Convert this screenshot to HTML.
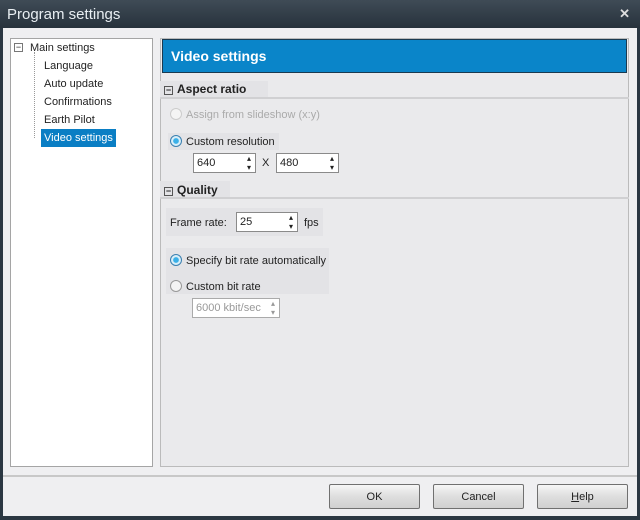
<!DOCTYPE html>
<html><head><style>
*{box-sizing:border-box;margin:0;padding:0}
body{width:640px;height:520px;overflow:hidden;background:#2b3742;font-family:"Liberation Sans",sans-serif;font-size:11px;color:#222;position:relative}
.tb{position:absolute;left:0;top:0;width:640px;height:28px;background:linear-gradient(#3f4b56,#27323c);color:#e8eef2;font-size:15px;padding:6px 0 0 7px}
.x{position:absolute;right:10px;top:6px;font-size:13px;font-weight:bold;color:#ddd}
.client{position:absolute;left:3px;top:28px;width:634px;height:488px;background:#efeff1}
.a{position:absolute;white-space:nowrap}
.tree{left:10px;top:38px;width:143px;height:429px;background:#fff;border:1px solid #a5a5a5}
.panel{left:160px;top:38px;width:469px;height:429px;background:#eaeaec;border:1px solid #bbb}
.hdr{left:162px;top:39px;width:465px;height:34px;background:#0a85c9;border:1px solid #1a3a50;color:#fff;font-weight:bold;font-size:14px;padding:8px 0 0 8px}
.sec{font-weight:bold;font-size:12px}
.sec i{display:inline-block;width:9px;height:9px;border:1px solid #555;font-style:normal;font-size:9px;line-height:6px;text-align:center;margin-right:4px;vertical-align:0}
.line{height:2px;background:#d0d0d2}
.rad{display:inline-block;width:12px;height:12px;border-radius:50%;border:1px solid #999;background:#f4f4f4;vertical-align:-2px;margin-right:4px}
.rad.on{border-color:#3a7fb0;background:radial-gradient(#3ab0e8 35%,#d8eef8 45%)}
.spin{background:#fff;border:1px solid #8a8a8a;height:20px;padding:3px 3px;font-size:11px}
.spin:after{content:"▴\A▾";white-space:pre;position:absolute;right:4px;top:0;font-size:8px;line-height:9px}
.btn{top:484px;width:91px;height:25px;border:1px solid #707070;border-radius:2px;background:linear-gradient(#f6f6f6,#dedede 50%,#d0d0d0);text-align:center;padding-top:6px}
.t{position:absolute;font-size:11px;white-space:nowrap}
</style></head><body>
<div class="tb">Program settings</div><div class="x">✕</div>
<div class="client"></div>
<div class="a tree"></div>
<div class="a" style="left:14px;top:43px;width:9px;height:9px;border:1px solid #777;font-size:9px;line-height:6px;text-align:center;background:#fff">−</div>
<div class="a" style="left:34px;top:52px;height:86px;border-left:1px dotted #999"></div>
<div class="t" style="left:30px;top:42px">Main settings</div>
<div class="t" style="left:44px;top:60px">Language</div>
<div class="t" style="left:44px;top:78px">Auto update</div>
<div class="t" style="left:44px;top:96px">Confirmations</div>
<div class="t" style="left:44px;top:114px">Earth Pilot</div>
<div class="t" style="left:41px;top:129px;background:#0a7ec4;color:#fff;padding:3px 3px;width:75px;height:18px">Video settings</div>
<div class="a panel"></div>
<div class="a hdr">Video settings</div>
<div class="a" style="left:160px;top:81px;width:108px;height:17px;background:#e3e3e6"></div>
<div class="a sec" style="left:164px;top:82px"><i>−</i>Aspect ratio</div>
<div class="a line" style="left:160px;top:97px;width:469px"></div>
<div class="t" style="left:170px;top:108px;color:#aaa"><span class="rad" style="border-color:#ccc"></span>Assign from slideshow (x:y)</div>
<div class="t" style="left:168px;top:133px;background:#e3e3e6;padding:2px 4px 2px 2px"><span class="rad on"></span>Custom resolution</div>
<div class="a spin" style="left:193px;top:153px;width:63px">640</div>
<div class="t" style="left:262px;top:157px">X</div>
<div class="a spin" style="left:276px;top:153px;width:63px">480</div>
<div class="a" style="left:160px;top:181px;width:70px;height:17px;background:#e3e3e6"></div>
<div class="a sec" style="left:164px;top:183px"><i>−</i>Quality</div>
<div class="a line" style="left:160px;top:197px;width:469px"></div>
<div class="a" style="left:166px;top:208px;width:157px;height:28px;background:#e3e3e6"></div>
<div class="t" style="left:170px;top:217px">Frame rate:</div>
<div class="a spin" style="left:236px;top:212px;width:62px">25</div>
<div class="t" style="left:304px;top:217px">fps</div>
<div class="a" style="left:166px;top:248px;width:163px;height:46px;background:#e3e3e6"></div>
<div class="t" style="left:170px;top:254px"><span class="rad on"></span>Specify bit rate automatically</div>
<div class="t" style="left:170px;top:280px"><span class="rad"></span>Custom bit rate</div>
<div class="a spin" style="left:192px;top:298px;width:88px;color:#999;border-color:#aaa">6000 kbit/sec</div>
<div class="a" style="left:3px;top:475px;width:634px;height:2px;background:#c8c8c8"></div>
<div class="a btn" style="left:329px">OK</div>
<div class="a btn" style="left:433px">Cancel</div>
<div class="a btn" style="left:537px"><u>H</u>elp</div>
</body></html>
